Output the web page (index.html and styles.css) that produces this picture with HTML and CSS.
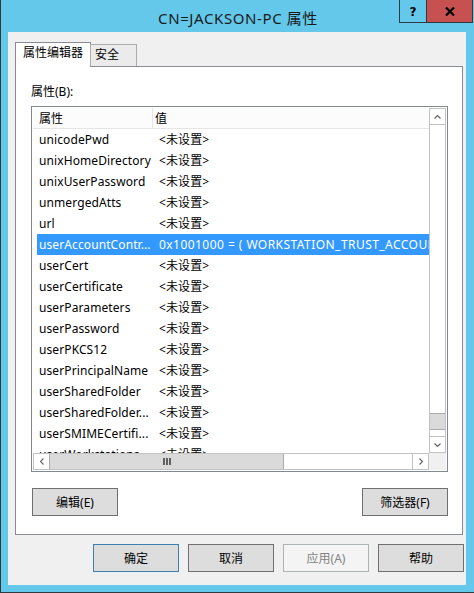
FILE: index.html
```html
<!DOCTYPE html>
<html lang="zh">
<head>
<meta charset="utf-8">
<title>CN=JACKSON-PC 属性</title>
<link rel="stylesheet" href="styles.css">
</head>
<body>
<div class="window">
  <div class="titlebar">
    <div class="title">CN=JACKSON-PC 属性</div>
  </div>
  <div class="caption-buttons">
    <div class="cap cap-help">?</div>
    <div class="cap cap-close">
      <svg width="10" height="9" viewBox="0 0 10 9"><path d="M1 0.5 L9 8.5 M9 0.5 L1 8.5" stroke="#000" stroke-width="2.2" fill="none"/></svg>
    </div>
  </div>
  <div class="client">
    <div class="tabs">
      <div class="tab tab-active">属性编辑器</div>
      <div class="tab tab-inactive">安全</div>
    </div>
    <div class="panel">
      <div class="label">属性(B):</div>
      <div class="listbox">
        <div class="list-main">
          <div class="list-view">
            <div class="header">
              <div class="hcell hcell-name">属性</div>
              <div class="hcell hcell-value">值</div>
            </div>
            <div class="rows">
              <div class="row"><span class="c-name">unicodePwd</span><span class="c-value">&lt;未设置&gt;</span></div>
              <div class="row"><span class="c-name">unixHomeDirectory</span><span class="c-value">&lt;未设置&gt;</span></div>
              <div class="row"><span class="c-name">unixUserPassword</span><span class="c-value">&lt;未设置&gt;</span></div>
              <div class="row"><span class="c-name">unmergedAtts</span><span class="c-value">&lt;未设置&gt;</span></div>
              <div class="row"><span class="c-name">url</span><span class="c-value">&lt;未设置&gt;</span></div>
              <div class="row row-selected"><span class="c-name">userAccountContr...</span><span class="c-value c-wide">0x1001000 = ( WORKSTATION_TRUST_ACCOUNT</span></div>
              <div class="row"><span class="c-name">userCert</span><span class="c-value">&lt;未设置&gt;</span></div>
              <div class="row"><span class="c-name">userCertificate</span><span class="c-value">&lt;未设置&gt;</span></div>
              <div class="row"><span class="c-name">userParameters</span><span class="c-value">&lt;未设置&gt;</span></div>
              <div class="row"><span class="c-name">userPassword</span><span class="c-value">&lt;未设置&gt;</span></div>
              <div class="row"><span class="c-name">userPKCS12</span><span class="c-value">&lt;未设置&gt;</span></div>
              <div class="row"><span class="c-name">userPrincipalName</span><span class="c-value">&lt;未设置&gt;</span></div>
              <div class="row"><span class="c-name">userSharedFolder</span><span class="c-value">&lt;未设置&gt;</span></div>
              <div class="row"><span class="c-name">userSharedFolder...</span><span class="c-value">&lt;未设置&gt;</span></div>
              <div class="row"><span class="c-name">userSMIMECertifi...</span><span class="c-value">&lt;未设置&gt;</span></div>
              <div class="row"><span class="c-name">userWorkstations</span><span class="c-value">&lt;未设置&gt;</span></div>
            </div>
          </div>
          <div class="vscroll">
            <div class="sb-btn sb-up">
              <svg width="7" height="4" viewBox="0 0 7 4"><path d="M0.5 3.5 L3.5 0.5 L6.5 3.5" stroke="#606060" stroke-width="1.1" fill="none"/></svg>
            </div>
            <div class="sb-space"></div>
            <div class="vthumb"></div>
            <div class="sb-gap"></div>
            <div class="sb-btn sb-down">
              <svg width="7" height="4" viewBox="0 0 7 4"><path d="M0.5 0.5 L3.5 3.5 L6.5 0.5" stroke="#606060" stroke-width="1.1" fill="none"/></svg>
            </div>
          </div>
        </div>
        <div class="hscroll-row">
          <div class="hscroll">
            <div class="sb-btn sb-left">
              <svg width="4" height="7" viewBox="0 0 4 7"><path d="M3.5 0.5 L0.5 3.5 L3.5 6.5" stroke="#606060" stroke-width="1.1" fill="none"/></svg>
            </div>
            <div class="hthumb"><span class="grip"></span><span class="grip"></span><span class="grip"></span></div>
            <div class="sb-track"></div>
            <div class="sb-btn sb-right">
              <svg width="4" height="7" viewBox="0 0 4 7"><path d="M0.5 0.5 L3.5 3.5 L0.5 6.5" stroke="#606060" stroke-width="1.1" fill="none"/></svg>
            </div>
          </div>
          <div class="corner"></div>
        </div>
      </div>
      <div class="panel-buttons">
        <div class="btn">编辑(E)</div>
        <div class="btn">筛选器(F)</div>
      </div>
    </div>
    <div class="dialog-buttons">
      <div class="btn btn-default">确定</div>
      <div class="btn">取消</div>
      <div class="btn btn-disabled">应用(A)</div>
      <div class="btn">帮助</div>
    </div>
  </div>
</div>
</body>
</html>
```
FILE: styles.css
```css
* { box-sizing: border-box; }
html, body { margin: 0; padding: 0; background: #64C8EA; }
body {
  font-family: "Noto Sans", "Noto Sans CJK SC", sans-serif;
  font-size: 12px;
  color: #000;
}
.window {
  position: relative;
  width: 474px;
  height: 593px;
  background: #64C8EA;
  border-left: 1px solid #2E3A40;
  border-bottom: 1px solid #2E3A40;
  padding: 0 8px 7px 7px;
  display: flex;
  flex-direction: column;
}
.titlebar {
  height: 32px;
  flex: none;
  display: flex;
  align-items: center;
  justify-content: center;
  padding-top: 2px;
  padding-left: 2px;
}
.title {
  font-size: 15px;
  letter-spacing: 0.6px;
  color: #1A1A1A;
  white-space: nowrap;
}
.caption-buttons {
  position: absolute;
  top: 0;
  right: 1px;
  display: flex;
  border: 1px solid #2E3A40;
  border-top: none;
  height: 23px;
}
.cap {
  display: flex;
  align-items: center;
  justify-content: center;
  height: 22px;
}
.cap-help {
  width: 27px;
  border-right: 1px solid #2E3A40;
  font-family: "DejaVu Sans", sans-serif;
  font-weight: bold;
  font-size: 12px;
  padding-top: 1px;
}
.cap-close {
  width: 45px;
  background: #C75050;
  padding-top: 1px;
}
.client {
  flex: 1;
  background: #F0F0F0;
  display: flex;
  flex-direction: column;
  padding: 10px 0 0 7px;
}
.tabs {
  display: flex;
  align-items: flex-end;
  height: 25px;
  margin-bottom: -1px;
  position: relative;
  z-index: 1;
}
.tab {
  line-height: 16px;
  padding-top: 2px;
  white-space: nowrap;
}
.tab-active {
  width: 76px;
  height: 25px;
  background: #FFF;
  border: 1px solid #898C95;
  border-bottom: none;
  text-align: center;
}
.tab-inactive {
  width: 47px;
  height: 22px;
  margin-left: -1px;
  margin-bottom: 1px;
  background: #EBEBEB;
  border: 1px solid #ACACAC;
  border-bottom: none;
  padding-left: 4px;
}
.panel {
  width: 448px;
  height: 469px;
  background: #FFF;
  border: 1px solid #898C95;
  padding: 17px 14px 0 15px;
  display: flex;
  flex-direction: column;
}
.label {
  line-height: 16px;
  height: 16px;
}
.listbox {
  margin-top: 6px;
  width: 417px;
  height: 366px;
  border: 1px solid #828790;
  padding: 1px;
  display: flex;
  flex-direction: column;
  background: #FFF;
}
.list-main {
  height: 345px;
  display: flex;
}
.list-view {
  width: 396px;
  display: flex;
  flex-direction: column;
  overflow: hidden;
}
.header {
  height: 21px;
  flex: none;
  background: #FCFCFC;
  border-bottom: 1px solid #E5E5E5;
  display: flex;
}
.hcell {
  line-height: 20px;
  padding-top: 1px;
  white-space: nowrap;
}
.hcell-name {
  width: 120px;
  padding-left: 6px;
  border-right: 1px solid #E5E5E5;
}
.hcell-value {
  flex: 1;
  padding-left: 2px;
}
.rows {
  flex: 1;
  overflow: hidden;
}
.row {
  height: 21px;
  line-height: 21px;
  margin-left: 4px;
  display: flex;
  white-space: nowrap;
  overflow: hidden;
  letter-spacing: 0.1px;
}
.row-selected {
  background: #3399FF;
  color: #FFF;
}
.c-name {
  width: 117px;
  flex: none;
  padding-left: 2px;
  overflow: hidden;
}
.c-value {
  padding-left: 5px;
  flex: none;
}
.c-wide {
  letter-spacing: 0.45px;
}
.vscroll {
  width: 17px;
  border-left: 1px solid #C2C2C2;
  border-right: 1px solid #C2C2C2;
  display: flex;
  flex-direction: column;
}
.sb-btn {
  display: flex;
  align-items: center;
  justify-content: center;
  flex: none;
}
.sb-up, .sb-down {
  height: 17px;
  border-top: 1px solid #C2C2C2;
  border-bottom: 1px solid #C2C2C2;
}
.sb-space { flex: 1; }
.vthumb {
  height: 17px;
  flex: none;
  background: #DADADA;
  border-top: 1px solid #ABABAB;
  border-bottom: 1px solid #ABABAB;
}
.sb-gap { height: 6px; flex: none; }
.hscroll-row {
  height: 17px;
  display: flex;
}
.hscroll {
  width: 396px;
  display: flex;
  border-top: 1px solid #C2C2C2;
  border-bottom: 1px solid #C2C2C2;
}
.sb-left, .sb-right {
  width: 17px;
  border-left: 1px solid #C2C2C2;
  border-right: 1px solid #C2C2C2;
}
.hthumb {
  width: 235px;
  flex: none;
  margin-left: -1px;
  background: #DADADA;
  border-left: 1px solid #ABABAB;
  border-right: 1px solid #ABABAB;
  display: flex;
  align-items: center;
  justify-content: center;
  gap: 1px;
}
.grip {
  width: 2px;
  height: 7px;
  background: #606060;
}
.sb-track { flex: 1; }
.corner {
  width: 17px;
  background: #F0F0F0;
}
.panel-buttons {
  margin-top: 16px;
  padding: 0 0 0 1px;
  display: flex;
  justify-content: space-between;
  width: 417px;
}
.btn {
  width: 86px;
  height: 28px;
  background: #DDDDDD;
  border: 1px solid #707070;
  display: flex;
  align-items: center;
  justify-content: center;
  white-space: nowrap;
  color: #000;
}
.btn-default {
  border-color: #3C7FB1;
}
.btn-disabled {
  background: #F4F4F4;
  border-color: #ADB2B5;
  color: #838383;
}
.dialog-buttons {
  margin-top: 9px;
  display: flex;
  justify-content: flex-end;
  gap: 9px;
  padding-right: 2px;
}
```
